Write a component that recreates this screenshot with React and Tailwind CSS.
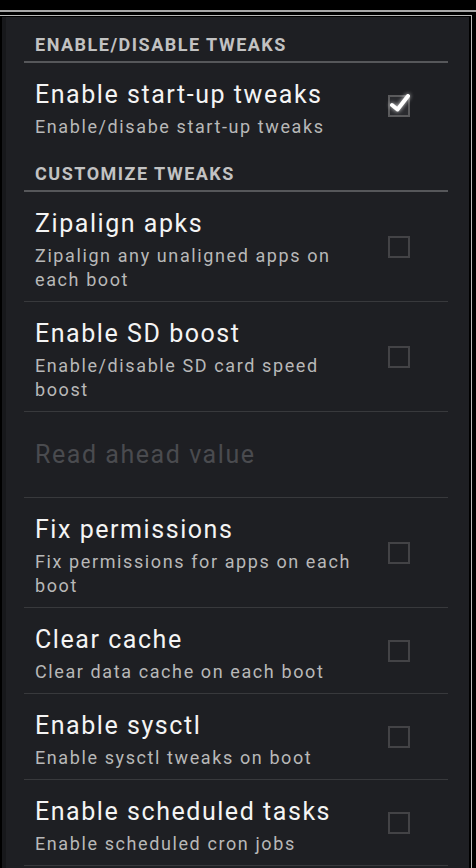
import React from "react";

function Box({ checked }) {
  return (
    <div className="relative w-[22px] h-[22px] shrink-0">
      <div
        className={
          checked
            ? "absolute inset-0 border-2 border-[#5a5a5c] bg-[#2a2b2f]"
            : "absolute inset-0 border-2 border-[#434346]"
        }
      />
      {checked && (
        <svg
          className="absolute left-[-5px] top-[-9px] overflow-visible"
          width="34"
          height="34"
          viewBox="0 0 34 34"
          style={{ filter: "drop-shadow(0 0 2px rgba(255,255,255,0.8))" }}
        >
          <path
            d="M9 19 L14.5 23.5 L25 10"
            fill="none"
            stroke="#ffffff"
            strokeWidth="4"
            strokeLinecap="round"
            strokeLinejoin="round"
          />
        </svg>
      )}
    </div>
  );
}

function Header({ children, first }) {
  return (
    <div
      className={
        (first ? "pt-[16px]" : "pt-[14px]") +
        " pb-[4px] border-b-2 border-[#56575a]"
      }
    >
      <div className="pl-[11px] text-[18px] leading-[24px] font-bold text-[#c2c2c2] tracking-[1.5px]">
        {children}
      </div>
    </div>
  );
}

function Item({ title, summary, checked, last }) {
  return (
    <div
      className={
        "flex items-center pl-[11px] pr-[38px] " +
        (last ? "" : "border-b border-[#38393c]")
      }
    >
      <div className="flex-1 pt-[17px] pb-[9px] pr-[24px]">
        <div className="text-[25px] leading-[30px] text-[#f4f4f4] tracking-[1.55px]">
          {title}
        </div>
        <div className="mt-[5px] text-[18px] leading-[24px] text-[#b8b8b8] tracking-[1.6px]">
          {summary}
        </div>
      </div>
      <Box checked={checked} />
    </div>
  );
}

export default function App() {
  return (
    <div
      className="w-[476px] h-[868px] bg-black overflow-hidden flex flex-col pt-[10px]"
      style={{ fontFamily: "Roboto, 'Liberation Sans', sans-serif" }}
    >
      <div className="h-[2px] bg-[#a6a6a6]" />
      <div className="mt-[3px] mr-[4px] flex-1 flex flex-col border-t border-r border-[#b8b8b8] pt-[1px] pr-[2px] pl-[2px]">
        <div className="flex-1 bg-[#1e1f23] flex">
          <div className="w-[4px] bg-[#17181b]" />
          <div className="flex-1 pl-[18px] pr-[21px]">
            <Header first>ENABLE/DISABLE TWEAKS</Header>
            <Item
              title="Enable start-up tweaks"
              summary="Enable/disabe start-up tweaks"
              checked
              last
            />
            <Header>CUSTOMIZE TWEAKS</Header>
            <Item
              title="Zipalign apks"
              summary="Zipalign any unaligned apps on each boot"
            />
            <Item
              title="Enable SD boost"
              summary="Enable/disable SD card speed boost"
            />
            <div className="h-[86px] flex items-center pl-[11px] border-b border-[#38393c]">
              <div className="text-[25px] leading-[30px] text-[#4a4b4f] tracking-[1.55px]">
                Read ahead value
              </div>
            </div>
            <Item
              title="Fix permissions"
              summary="Fix permissions for apps on each boot"
            />
            <Item
              title="Clear cache"
              summary="Clear data cache on each boot"
            />
            <Item
              title="Enable sysctl"
              summary="Enable sysctl tweaks on boot"
            />
            <Item
              title="Enable scheduled tasks"
              summary="Enable scheduled cron jobs"
            />
          </div>
        </div>
      </div>
    </div>
  );
}
